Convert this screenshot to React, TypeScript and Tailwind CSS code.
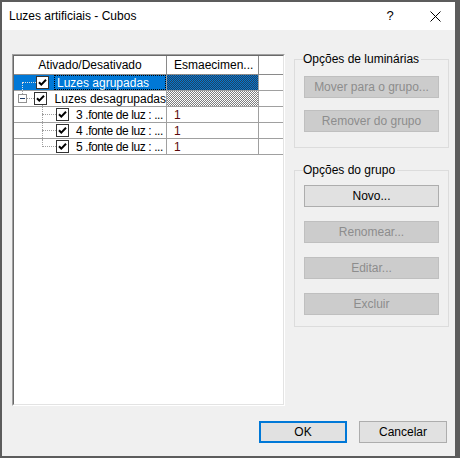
import React from "react";

const FONT = { fontFamily: '"Segoe UI", "Liberation Sans", Arial, sans-serif' };

/* ---------- piccoli elementi ---------- */

function CheckBox() {
  return (
    <svg width="13" height="13" viewBox="0 0 13 13" className="shrink-0">
      <rect x="0.5" y="0.5" width="12" height="12" fill="#fff" stroke="#333" />
      <path d="M3 6.2 L5.3 8.6 L10 3.8" fill="none" stroke="#000" strokeWidth="2" />
    </svg>
  );
}

function MinusBox() {
  return (
    <div className="w-[9px] h-[9px] shrink-0 border border-[#919191] bg-white flex items-center justify-center">
      <div className="w-[5px] h-px bg-[#1f3c66]" />
    </div>
  );
}

function Btn({ label, disabled, primary }: { label: string; disabled?: boolean; primary?: boolean }) {
  if (disabled)
    return (
      <div className="h-[22px] w-full flex items-center justify-center whitespace-nowrap border border-[#bfbfbf] bg-[#cccccc] text-[#8d8d8d]">
        {label}
      </div>
    );
  return (
    <div
      className={
        primary
          ? "h-[22px] w-full flex items-center justify-center whitespace-nowrap border-2 border-[#0078d7] bg-[#e1e1e1]"
          : "h-[22px] w-full flex items-center justify-center whitespace-nowrap border border-[#adadad] bg-[#e1e1e1]"
      }
    >
      {label}
    </div>
  );
}

const hatchGray =
  "bg-[repeating-conic-gradient(#7e7e7e_0_25%,#ffffff_0_50%)] bg-[length:2px_2px]";
const hatchBlue =
  "bg-[repeating-conic-gradient(#27405c_0_25%,#0078d7_0_50%)] bg-[length:2px_2px]";

/* ---------- righe dell'albero ---------- */

type Child = { label: string; value: string; last?: boolean };
const CHILDREN: Child[] = [
  { label: "3 .fonte de luz : ...", value: "1" },
  { label: "4 .fonte de luz : ...", value: "1" },
  { label: "5 .fonte de luz : ...", value: "1", last: true },
];

function TreeList() {
  return (
    <div className="w-[273px] h-[352px] mt-[3px] border border-[#a0a0a0] border-r-white border-b-white">
      <div className="h-full border border-[#696969] border-r-[#e3e3e3] border-b-[#e3e3e3] bg-white whitespace-nowrap">
        {/* intestazione */}
        <div className="flex h-[19px] border-b border-[#8a8a8a]">
          <div className="w-[153px] border-r border-[#8a8a8a] flex items-center justify-center">
            Ativado/Desativado
          </div>
          <div className="w-[92px] border-r border-[#8a8a8a] flex items-center pl-[7px] overflow-hidden">
            Esmaecimen...
          </div>
        </div>

        {/* Luzes agrupadas (selezionata) */}
        <div className="flex h-[16px] border-b border-[#a0a0a0]">
          <div className="relative w-[153px] border-r border-[#a0a0a0] bg-[#0078d7] flex items-center pl-[8px]">
            <div className="absolute left-[8px] top-[8px] bottom-0 border-l border-dotted border-[#e0e0e0]" />
            <div className="w-[14px] border-t border-dotted border-[#e0e0e0]" />
            <CheckBox />
            <div className="ml-[5px] flex-1 self-stretch border border-dotted border-black flex items-center pl-[2px] text-white">
              Luzes agrupadas
            </div>
          </div>
          <div className={"w-[92px] border-r border-[#a0a0a0] " + hatchBlue} />
        </div>

        {/* Luzes desagrupadas */}
        <div className="flex h-[16px] border-b border-[#a0a0a0]">
          <div className="relative w-[153px] border-r border-[#a0a0a0] flex items-center pl-[4px]">
            <div className="absolute left-[8px] top-0 h-[3px] border-l border-dotted border-[#a0a0a0]" />
            <div className="absolute left-[28px] top-[14px] bottom-0 border-l border-dotted border-[#a0a0a0]" />
            <MinusBox />
            <div className="w-[9px] border-t border-dotted border-[#a0a0a0]" />
            <CheckBox />
            <span className="ml-[8px]">Luzes desagrupadas</span>
          </div>
          <div className={"w-[92px] border-r border-[#a0a0a0] " + hatchGray} />
        </div>

        {CHILDREN.map((c) => (
          <div key={c.label} className="flex h-[16px] border-b border-[#a0a0a0]">
            <div className="relative w-[153px] border-r border-[#a0a0a0] flex items-center pl-[28px]">
              <div
                className={
                  c.last
                    ? "absolute left-[28px] top-0 h-[8px] border-l border-dotted border-[#a0a0a0]"
                    : "absolute left-[28px] top-0 bottom-0 border-l border-dotted border-[#a0a0a0]"
                }
              />
              <div className="w-[14px] shrink-0 border-t border-dotted border-[#a0a0a0]" />
              <CheckBox />
              <span className="ml-[7px] tracking-[-0.4px]">{c.label}</span>
            </div>
            <div className="w-[92px] border-r border-[#a0a0a0] pl-[7px] flex items-center text-[#5a0a0a]">
              {c.value}
            </div>
          </div>
        ))}
      </div>
    </div>
  );
}

/* ---------- finestra ---------- */

export default function App() {
  return (
    <div
      className="w-[460px] h-[458px] bg-[#5c5c5c] pl-[2px] pt-[2px] pb-[2px] pr-[5px] flex flex-col text-[12px] leading-[16px] text-black"
      style={FONT}
    >
      {/* barra del titolo */}
      <div className="h-[28px] bg-white flex items-center pl-[7px]">
        <span className="flex-1">Luzes artificiais - Cubos</span>
        <div className="w-[40px] flex justify-center text-[13px]">?</div>
        <div className="w-[40px] ml-[5px] flex justify-center">
          <svg width="11" height="11" viewBox="0 0 11 11">
            <path d="M0.5 0.5 L10.5 10.5 M10.5 0.5 L0.5 10.5" stroke="#000" strokeWidth="1" />
          </svg>
        </div>
      </div>

      {/* corpo */}
      <div className="flex-1 bg-[#f0f0f0] flex flex-col pl-[10px] pr-[6px] pt-[21px]">
        <div className="flex gap-[9px] items-start">
          <TreeList />

          <div className="w-[155px] flex flex-col">
            <fieldset className="border border-[#dcdcdc] px-[9px] pt-[9px] pb-[15px]">
              <legend className="-ml-px pr-[2px]">Opções de luminárias</legend>
              <div className="flex flex-col gap-[12px]">
                <Btn label="Mover para o grupo..." disabled />
                <Btn label="Remover do grupo" disabled />
              </div>
            </fieldset>

            <fieldset className="mt-[14px] border border-[#dcdcdc] px-[9px] pt-[7px] pb-[11px]">
              <legend className="-ml-px pr-[2px]">Opções do grupo</legend>
              <div className="flex flex-col gap-[14px]">
                <Btn label="Novo..." />
                <Btn label="Renomear..." disabled />
                <Btn label="Editar..." disabled />
                <Btn label="Excluir" disabled />
              </div>
            </fieldset>
          </div>
        </div>

        {/* pulsanti finali */}
        <div className="mt-[15px] flex justify-end gap-[12px] pr-[2px]">
          <div className="w-[88px]">
            <Btn label="OK" primary />
          </div>
          <div className="w-[88px]">
            <Btn label="Cancelar" />
          </div>
        </div>
      </div>
    </div>
  );
}
